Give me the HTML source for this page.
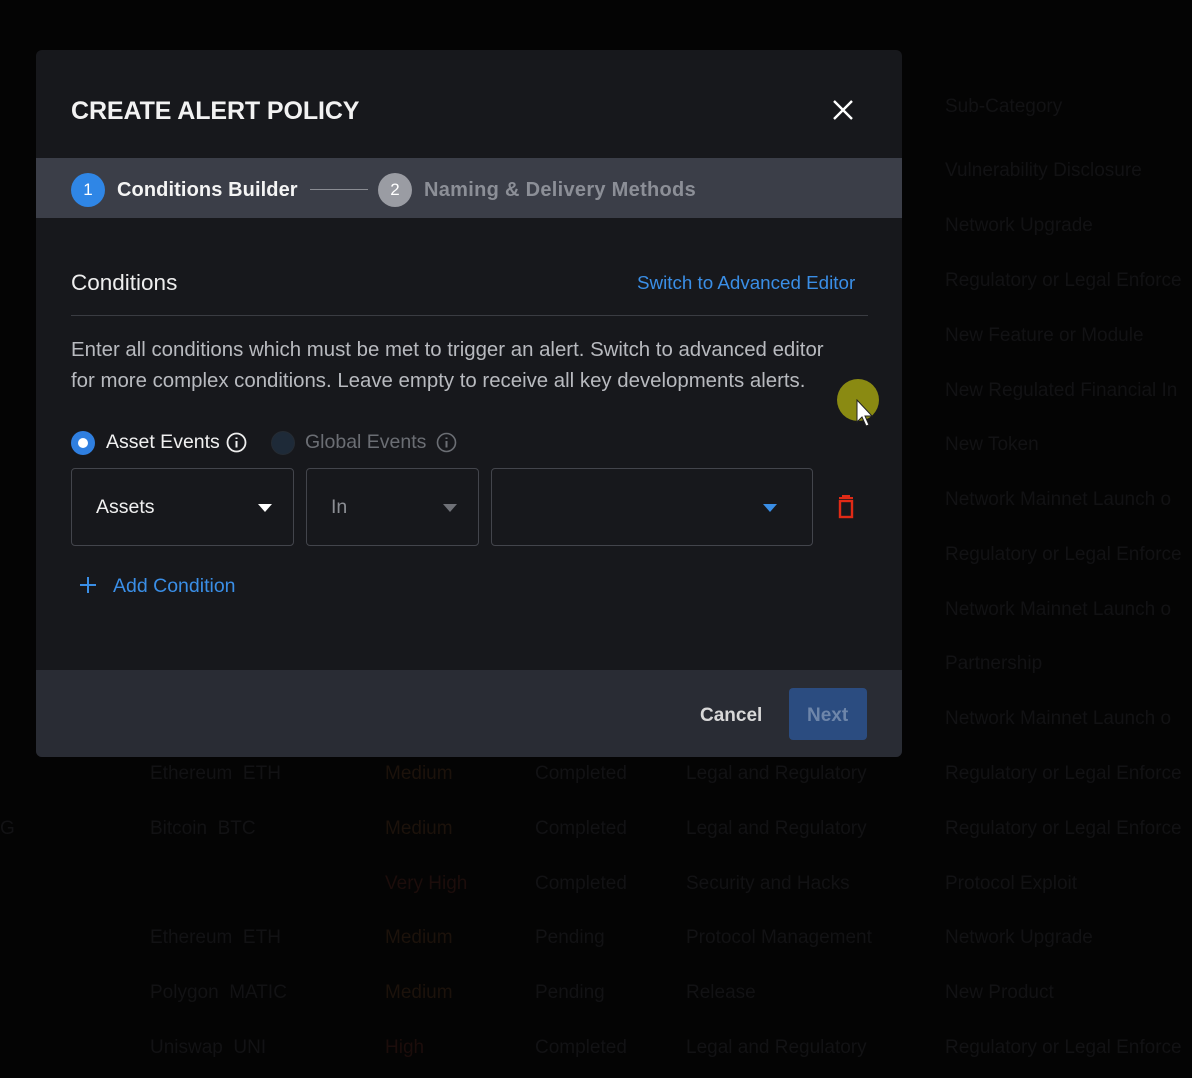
<!DOCTYPE html>
<html><head><meta charset="utf-8">
<style>
*{box-sizing:border-box;margin:0;padding:0}
body{width:1192px;height:1078px;background:#040404;font-family:"Liberation Sans",sans-serif;position:relative;overflow:hidden}
.bg{position:absolute;font-size:19px;color:#121214;white-space:nowrap}
.modal{position:absolute;left:36px;top:50px;width:866px;height:707px;background:#17181c;border-radius:6px;overflow:hidden}
.abs{position:absolute;white-space:nowrap}
.title{left:35px;top:47px;font-size:25px;font-weight:bold;color:#f2f2f2;letter-spacing:-0.1px}
.stepbar{position:absolute;left:0;top:108px;width:866px;height:60px;background:#3b3e48}
.circ{position:absolute;width:34px;height:34px;border-radius:50%;color:#fff;font-size:17px;text-align:center;line-height:34px}
.footer{position:absolute;left:0;top:620px;width:866px;height:87px;background:#292c34}
.sel{position:absolute;top:418px;height:78px;border:1.5px solid #43454c;border-radius:4px;background:#17181c}
.tri{position:absolute;width:0;height:0;border-left:7px solid transparent;border-right:7px solid transparent;border-top:8px solid #fff}
</style></head><body>
<div class="bg" style="left:945px;top:96px">Sub-Category</div>
<div class="bg" style="left:945px;top:160px">Vulnerability Disclosure</div>
<div class="bg" style="left:945px;top:215px">Network Upgrade</div>
<div class="bg" style="left:945px;top:270px">Regulatory or Legal Enforce</div>
<div class="bg" style="left:945px;top:325px">New Feature or Module</div>
<div class="bg" style="left:945px;top:380px">New Regulated Financial In</div>
<div class="bg" style="left:945px;top:434px">New Token</div>
<div class="bg" style="left:945px;top:489px">Network Mainnet Launch o</div>
<div class="bg" style="left:945px;top:544px">Regulatory or Legal Enforce</div>
<div class="bg" style="left:945px;top:599px">Network Mainnet Launch o</div>
<div class="bg" style="left:945px;top:653px">Partnership</div>
<div class="bg" style="left:945px;top:708px">Network Mainnet Launch o</div>
<div class="bg" style="left:150px;top:763px">Ethereum &nbsp;ETH</div><div class="bg" style="left:385px;top:763px;color:#1c120b">Medium</div><div class="bg" style="left:535px;top:763px">Completed</div><div class="bg" style="left:686px;top:763px">Legal and Regulatory</div><div class="bg" style="left:945px;top:763px">Regulatory or Legal Enforce</div>
<div class="bg" style="left:150px;top:818px">Bitcoin &nbsp;BTC</div><div class="bg" style="left:385px;top:818px;color:#1c120b">Medium</div><div class="bg" style="left:535px;top:818px">Completed</div><div class="bg" style="left:686px;top:818px">Legal and Regulatory</div><div class="bg" style="left:945px;top:818px">Regulatory or Legal Enforce</div>
<div class="bg" style="left:385px;top:873px;color:#1c0d0b">Very High</div><div class="bg" style="left:535px;top:873px">Completed</div><div class="bg" style="left:686px;top:873px">Security and Hacks</div><div class="bg" style="left:945px;top:873px">Protocol Exploit</div>
<div class="bg" style="left:150px;top:927px">Ethereum &nbsp;ETH</div><div class="bg" style="left:385px;top:927px;color:#1c120b">Medium</div><div class="bg" style="left:535px;top:927px">Pending</div><div class="bg" style="left:686px;top:927px">Protocol Management</div><div class="bg" style="left:945px;top:927px">Network Upgrade</div>
<div class="bg" style="left:150px;top:982px">Polygon &nbsp;MATIC</div><div class="bg" style="left:385px;top:982px;color:#1c120b">Medium</div><div class="bg" style="left:535px;top:982px">Pending</div><div class="bg" style="left:686px;top:982px">Release</div><div class="bg" style="left:945px;top:982px">New Product</div>
<div class="bg" style="left:150px;top:1037px">Uniswap &nbsp;UNI</div><div class="bg" style="left:385px;top:1037px;color:#1c0d0b">High</div><div class="bg" style="left:535px;top:1037px">Completed</div><div class="bg" style="left:686px;top:1037px">Legal and Regulatory</div><div class="bg" style="left:945px;top:1037px">Regulatory or Legal Enforce</div>
<div class="bg" style="left:0;top:818px">G</div>

<div class="modal">
  <div class="abs title">CREATE ALERT POLICY</div>
  <svg class="abs" style="left:796px;top:49px" width="22" height="22" viewBox="0 0 22 22"><path d="M2 2L20 20M20 2L2 20" stroke="#fff" stroke-width="2.4"/></svg>
  <div class="stepbar">
    <div class="circ" style="left:35px;top:15px;background:#2f86e6">1</div>
    <div class="abs" style="left:81px;top:21px;font-size:20px;font-weight:bold;color:#f4f4f4;letter-spacing:0.1px">Conditions Builder</div>
    <div class="abs" style="left:274px;top:31px;width:58px;height:1px;background:#8a8c93"></div>
    <div class="circ" style="left:342px;top:15px;background:#9a9ca3">2</div>
    <div class="abs" style="left:388px;top:21px;font-size:20px;font-weight:bold;color:#8c8f97;letter-spacing:0.3px">Naming &amp; Delivery Methods</div>
  </div>
  <div class="abs" style="left:35px;top:220px;font-size:22.5px;color:#eee">Conditions</div>
  <div class="abs" style="left:601px;top:222px;font-size:18.8px;color:#3a8ee6">Switch to Advanced Editor</div>
  <div class="abs" style="left:35px;top:265px;width:797px;height:1px;background:#3a3c42"></div>
  <div class="abs" style="left:35px;top:285px;font-size:20.4px;color:#b8babf;line-height:31px">Enter all conditions which must be met to trigger an alert. Switch to advanced editor<br>for more complex conditions. Leave empty to receive all key developments alerts.</div>
  <div class="abs" style="left:35px;top:381px;width:24px;height:24px;border-radius:50%;background:#2f7fe0"></div>
  <div class="abs" style="left:42px;top:388px;width:10px;height:10px;border-radius:50%;background:#fff"></div>
  <div class="abs" style="left:70px;top:381px;font-size:19.5px;color:#f0f0f0">Asset Events</div>
  <svg class="abs" style="left:190px;top:382px" width="21" height="21" viewBox="0 0 21 21"><circle cx="10.5" cy="10.5" r="9" fill="none" stroke="#eee" stroke-width="1.8"/><path d="M10.5 9v6.5M10.5 5.5v1.5" stroke="#eee" stroke-width="2"/></svg>
  <div class="abs" style="left:235px;top:381px;width:24px;height:24px;border-radius:50%;background:#1e2a38;border:1.5px solid #252b33"></div>
  <div class="abs" style="left:269px;top:381px;font-size:19.5px;color:#6b6e74">Global Events</div>
  <svg class="abs" style="left:400px;top:382px" width="21" height="21" viewBox="0 0 21 21"><circle cx="10.5" cy="10.5" r="9" fill="none" stroke="#6b6e74" stroke-width="1.6"/><path d="M10.5 9v6.5M10.5 5.5v1.5" stroke="#6b6e74" stroke-width="2"/></svg>
  <div class="sel" style="left:35px;width:223px"><div class="abs" style="left:24px;top:27px;font-size:19.5px;color:#f0f0f0">Assets</div><div class="tri" style="left:186px;top:35px"></div></div>
  <div class="sel" style="left:270px;width:173px"><div class="abs" style="left:24px;top:27px;font-size:19.5px;color:#8c8e94">In</div><div class="tri" style="left:136px;top:35px;border-top-color:#6f7177"></div></div>
  <div class="sel" style="left:455px;width:322px"><div class="tri" style="left:271px;top:35px;border-top-color:#3a8ee6"></div></div>
  <svg class="abs" style="left:800px;top:445px" width="20" height="24" viewBox="0 0 20 24"><path d="M3 3h14M7 3V1h6v2" stroke="#e02a16" stroke-width="2" fill="none"/><rect x="4" y="6" width="12" height="16" fill="none" stroke="#e02a16" stroke-width="2.4"/></svg>
  <svg class="abs" style="left:44px;top:527px" width="16" height="16" viewBox="0 0 16 16"><path d="M8 0v16M0 8h16" stroke="#3a8ee6" stroke-width="2"/></svg>
  <div class="abs" style="left:77px;top:525px;font-size:19.5px;color:#3a8ee6">Add Condition</div>
  <div class="footer">
    <div class="abs" style="left:664px;top:35px;font-size:19px;font-weight:bold;color:#d8d8d8">Cancel</div>
    <div class="abs" style="left:753px;top:18px;width:78px;height:52px;border-radius:4px;background:#2b4c80"></div>
    <div class="abs" style="left:771px;top:35px;font-size:19px;font-weight:bold;color:#6e86aa">Next</div>
  </div>
</div>
<div class="abs" style="left:837px;top:379px;width:42px;height:42px;border-radius:50%;background:#8a8a12"></div>
<svg class="abs" style="left:856px;top:399px" width="20" height="30" viewBox="0 0 20 30"><path d="M1 1v22l5-5 4 9 3-1-4-9h7z" fill="#fff" stroke="#222" stroke-width="1"/></svg>
</body></html>
